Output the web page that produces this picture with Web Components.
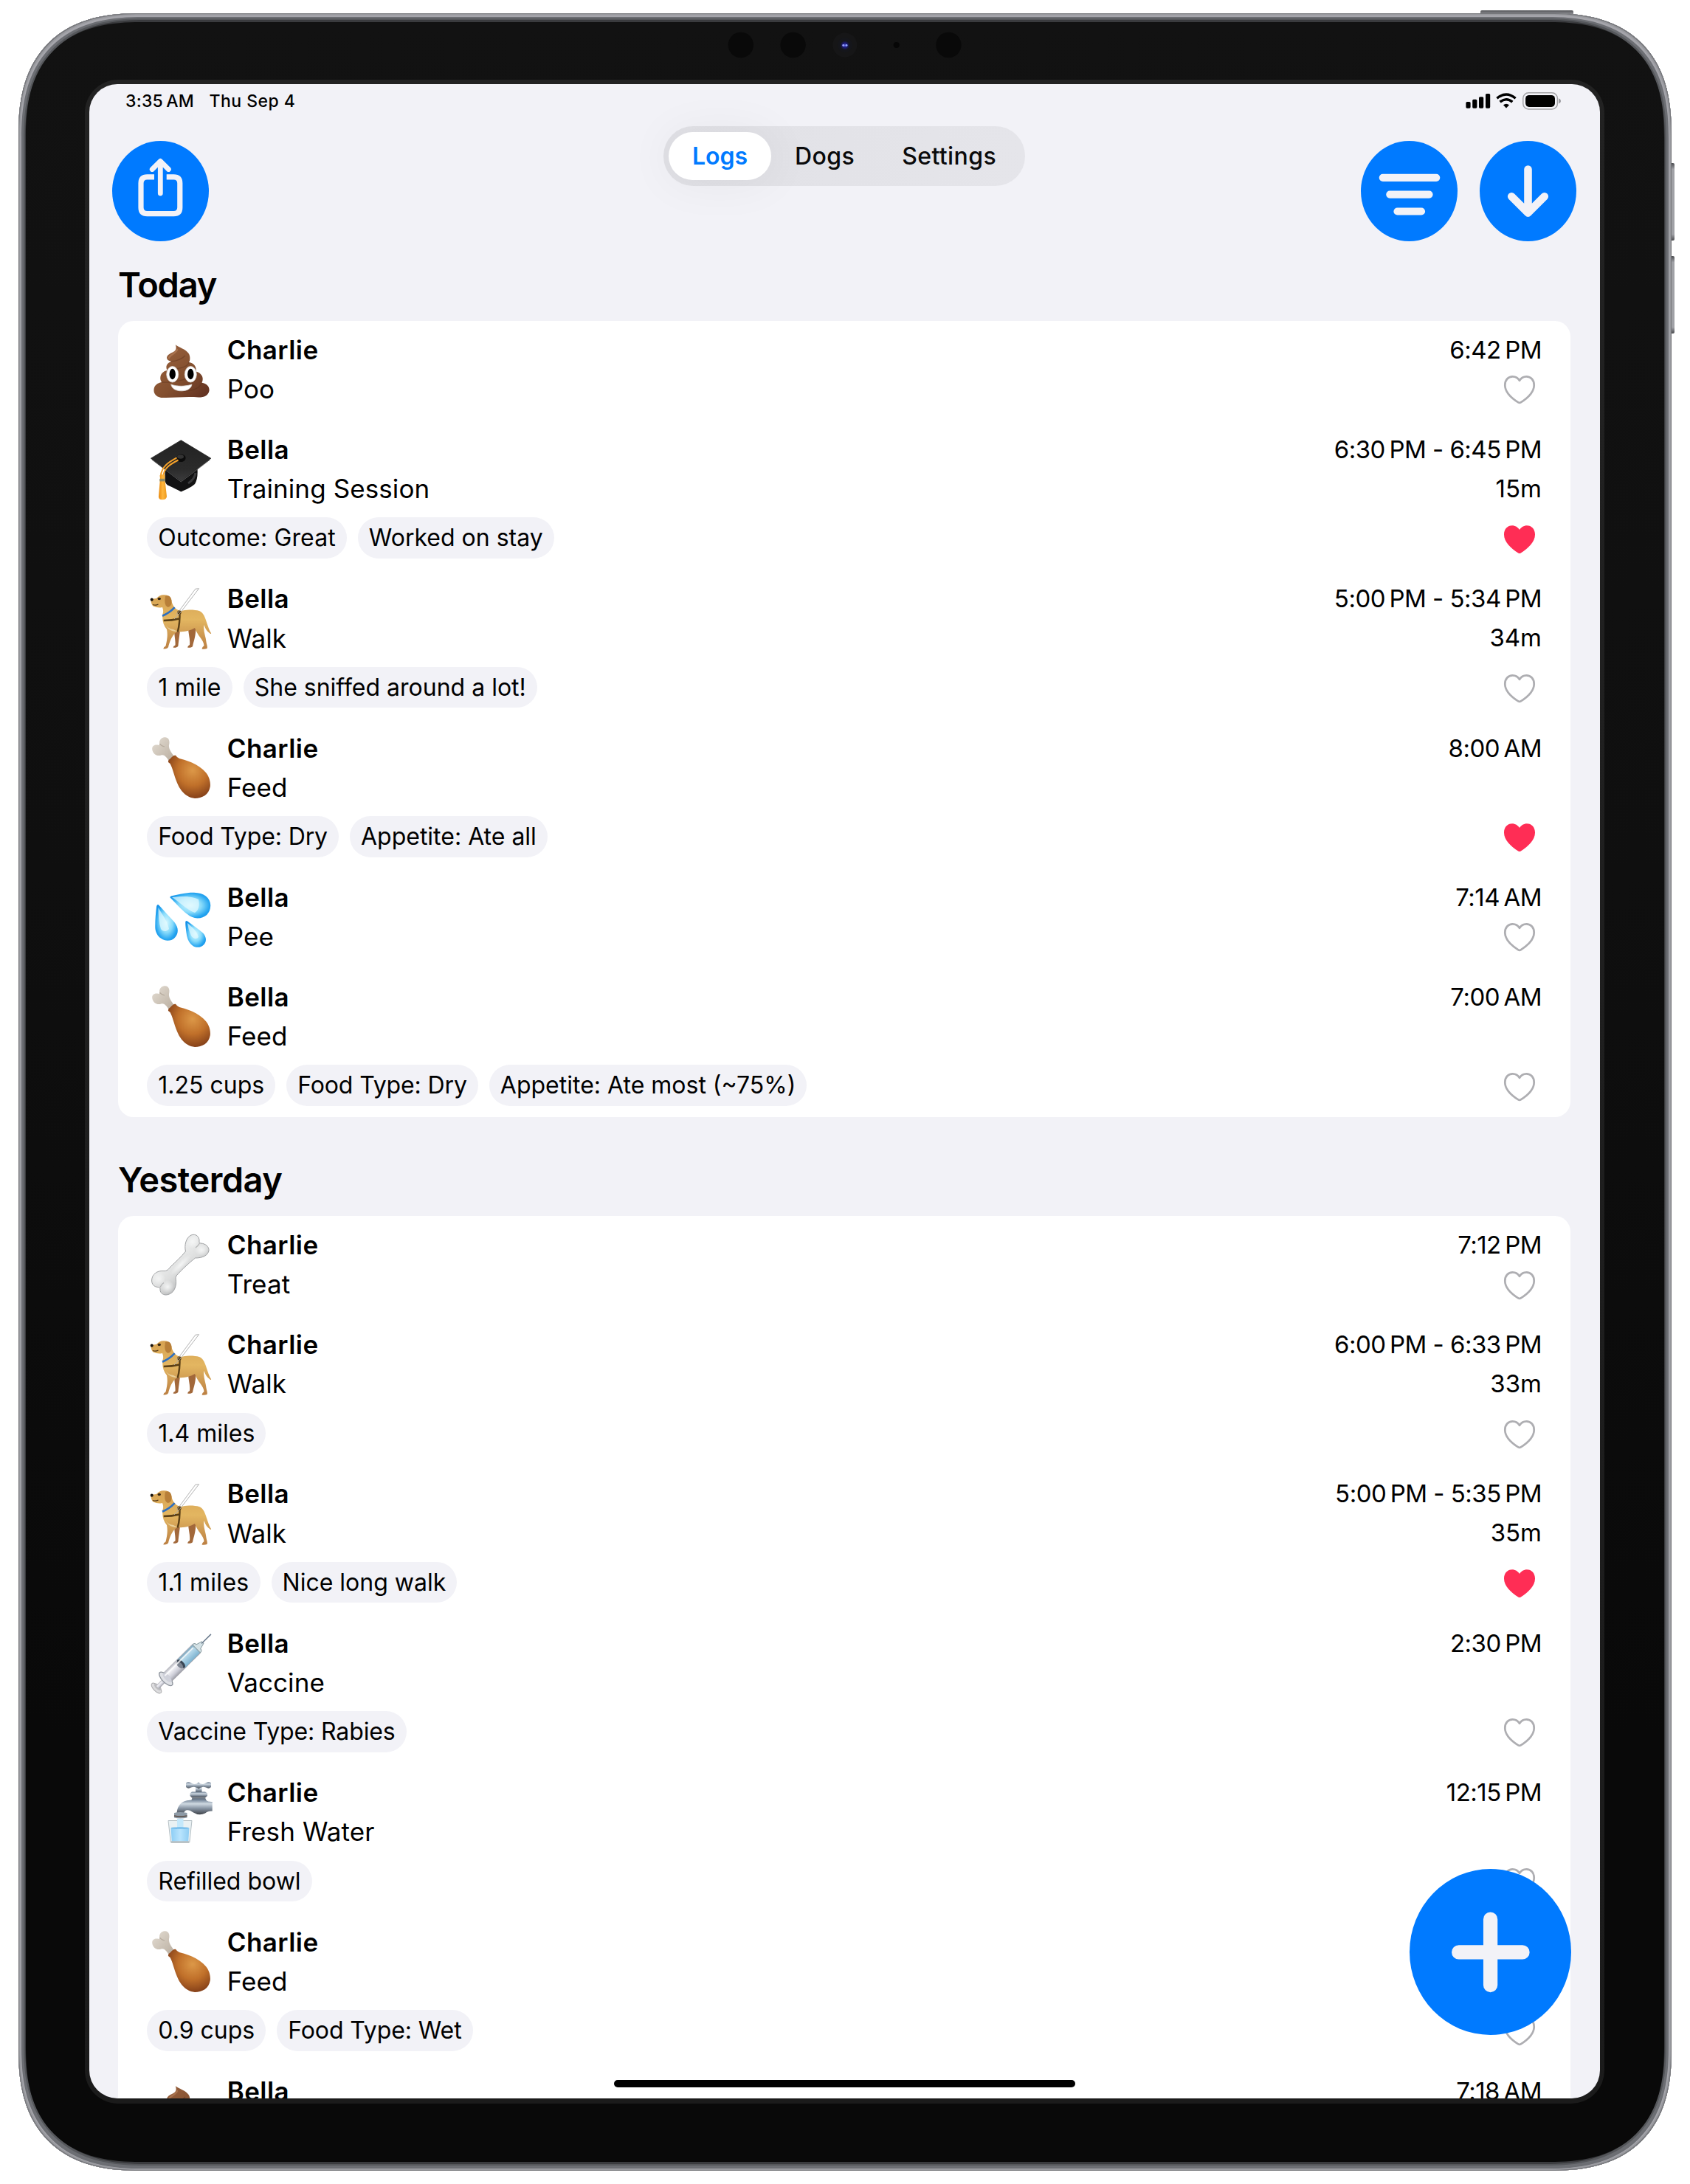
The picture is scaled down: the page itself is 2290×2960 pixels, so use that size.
<!DOCTYPE html>
<html lang="en">
<head>
<meta charset="utf-8">
<title>Logs</title>
<style>
html,body{margin:0;background:#fff}
body{width:2290px;height:2960px;overflow:hidden;font-family:Inter,"Liberation Sans",sans-serif;color:#000}
</style>
</head>
<body>
<tablet-frame>
  <status-bar time="3:35&#8239;AM" date="Thu Sep 4"></status-bar>
  <app-header></app-header>
  <log-section heading="Today" style="--ls:-1.2px">
    <log-row icon="poo" name="Charlie" action="Poo" time="6:42 PM" short></log-row>
    <log-row icon="cap" name="Bella" action="Training Session" time="6:30 PM - 6:45 PM" duration="15m" liked>
      <log-chip style="letter-spacing:.13px">Outcome: Great</log-chip><log-chip>Worked on stay</log-chip>
    </log-row>
    <log-row icon="dog" name="Bella" action="Walk" time="5:00 PM - 5:34 PM" duration="34m">
      <log-chip style="letter-spacing:.2px">1 mile</log-chip><log-chip>She sniffed around a lot!</log-chip>
    </log-row>
    <log-row icon="drumstick" name="Charlie" action="Feed" time="8:00 AM" liked>
      <log-chip style="letter-spacing:-.12px">Food Type: Dry</log-chip><log-chip>Appetite: Ate all</log-chip>
    </log-row>
    <log-row icon="drops" name="Bella" action="Pee" time="7:14 AM" short></log-row>
    <log-row icon="drumstick" name="Bella" action="Feed" time="7:00 AM">
      <log-chip>1.25 cups</log-chip><log-chip style="letter-spacing:-.12px">Food Type: Dry</log-chip><log-chip>Appetite: Ate most (~75%)</log-chip>
    </log-row>
  </log-section>
  <log-section heading="Yesterday" style="--ls:-.55px;--top:55px">
    <log-row icon="bone" name="Charlie" action="Treat" time="7:12 PM" short></log-row>
    <log-row icon="dog" name="Charlie" action="Walk" time="6:00 PM - 6:33 PM" duration="33m">
      <log-chip>1.4 miles</log-chip>
    </log-row>
    <log-row icon="dog" name="Bella" action="Walk" time="5:00 PM - 5:35 PM" duration="35m" liked>
      <log-chip style="letter-spacing:.3px">1.1 miles</log-chip><log-chip>Nice long walk</log-chip>
    </log-row>
    <log-row icon="syringe" name="Bella" action="Vaccine" time="2:30 PM">
      <log-chip style="letter-spacing:-.12px">Vaccine Type: Rabies</log-chip>
    </log-row>
    <log-row icon="faucet" name="Charlie" action="Fresh Water" time="12:15 PM">
      <log-chip>Refilled bowl</log-chip>
    </log-row>
    <log-row icon="drumstick" name="Charlie" action="Feed" time="">
      <log-chip>0.9 cups</log-chip><log-chip style="letter-spacing:-.1px">Food Type: Wet</log-chip>
    </log-row>
    <log-row icon="poo" name="Bella" action="" time="7:18 AM" short></log-row>
  </log-section>
  <add-button slot="overlay"></add-button>
  <home-indicator slot="overlay"></home-indicator>
</tablet-frame>

<script>
function define(name, render) {
  customElements.define(name, class extends HTMLElement {
    connectedCallback() {
      if (this.shadowRoot) return;
      this.attachShadow({ mode: 'open' }).innerHTML = render(this);
    }
  });
}

const ICONS = {
  poo: `<defs><linearGradient id="a" x1="0" y1="0" x2="1" y2="1"><stop offset="0" stop-color="#9c6440"/><stop offset=".55" stop-color="#84502f"/><stop offset="1" stop-color="#5f2f20"/></linearGradient></defs>
    <path fill="url(#a)" d="M34.7 7.2C40 11.5 53.5 14 54.3 24C54.6 27.5 54 29.5 53 31C60 32 63.5 37 62.5 43.5C71 45.5 73.5 53 70.5 58.7C77.500 60 81 64 80.500 69.500C79.500 76 73.500 78.700 66 78.600C50 77 34 79.400 18 79C10 78.800 5 74.500 5.500 68C6 62 10.500 59 16 58C12 52 15 43.500 23.500 42C20.500 36 24 32 29 29.700C20.500 28 21 21.500 31 17.500C36 15 36.500 11.500 34.700 7.200Z"/>
    <g fill="none" stroke="#5e321d" stroke-opacity=".45" stroke-width="1.3"><path d="M24 41.500C34 41 52 38 53 31"/><path d="M16 58C30 59 60 54 62.500 43.500"/><path d="M45 70C58 70 68 66 70.500 58.700"/><path d="M29 29.700C36 30 44 26 48 22"/></g>
    <path d="M26 25C27 21 35 19 37 14" fill="none" stroke="#bf8a63" stroke-opacity=".5" stroke-width="2.500" stroke-linecap="round"/>
    <g fill="#fff" stroke="#d8d4d2" stroke-width=".8"><ellipse cx="30.700" cy="47.300" rx="8" ry="10.800"/><ellipse cx="55.300" cy="47.300" rx="8" ry="10.800"/><path d="M28.700 61C37 64 48 64 57 61C56 67 50 69.800 42.800 69.800C35.500 69.800 30 67 28.700 61Z"/></g>
    <ellipse cx="30.700" cy="47" rx="4.200" ry="7.200"/><ellipse cx="55.300" cy="47" rx="4.200" ry="7.200"/>`,
  cap: `<defs><linearGradient id="a" x1="0" y1="0" x2="0" y2="1"><stop offset="0" stop-color="#222"/><stop offset=".7" stop-color="#2b2b2b"/><stop offset="1" stop-color="#3c3c3d"/></linearGradient><linearGradient id="t" x1="0" x2="1"><stop offset="0" stop-color="#e8890f"/><stop offset=".5" stop-color="#ffb63c"/><stop offset="1" stop-color="#ec9a1e"/></linearGradient></defs>
    <path fill="#121213" d="M20.500 42V55Q20.500 60 24 62.500C32 66 38 69 42.300 71.500C47 69 56 66 61 61Q65.500 54 64.500 40Z"/><path d="M52 60Q61 54 62 46" fill="none" stroke="#39393b" stroke-width="3"/>
    <path fill="url(#a)" stroke="#1a1a1a" stroke-width=".8" stroke-linejoin="round" d="M42.300 1.700L82.800 26.200L42.300 57.500L1.500 26.200Z"/><path d="M3 28L42.300 58L81.500 28" fill="none" stroke="#555" stroke-width="1"/>
    <ellipse cx="42.300" cy="25.700" rx="6.300" ry="5.200" fill="#0b0b0b"/><ellipse cx="41.500" cy="24" rx="4.500" ry="2.800" fill="#333"/>
    <g fill="none" stroke="#f4a12a" stroke-width="2"><path d="M36.500 25.300C26 31 16 37 14.800 50"/><path d="M38.500 28.500C28 34 19 39 18.500 50"/></g>
    <path fill="url(#t)" d="M13.500 49.500Q17 46.500 20.700 49.500L20.300 53.500L23 78Q22.500 82.200 17 82.200Q11.800 82.200 11.900 78L14 53.500Z"/><rect x="13.300" y="53.800" width="7.400" height="3.600" fill="#8e8a66"/>`,
  dog: `<defs><linearGradient id="a" x1="0" y1="0" x2="0" y2="1"><stop offset="0" stop-color="#d6a252"/><stop offset=".45" stop-color="#e3b661"/><stop offset="1" stop-color="#bb7f42"/></linearGradient></defs>
    <path fill="#a2683a" d="M33 55L41 57C40 66 39 72 38.500 78Q38 81 32 80.800Q31 79 34.500 77.500C35 70 33 65 33 55ZM52 53L62 52C63 63 60 70 58 79Q57 81 51.500 80.700Q50.500 79 54 77C55 69 52 62 52 53Z"/>
    <path fill="url(#a)" d="M1.500 15Q5 14.500 9 14Q13 9 19 9.200Q26 9 29 15C30 22 33 29 42 31C50 29 60 29 67 31C76 34 76.500 50 83 61Q83.500 62.800 81.500 61.500Q76 58 73.500 50C72 58 76 66 76.500 73C77 77 78.500 79 77.500 82Q74 83.200 70.500 82.500Q71 79.500 73.500 78C73 70 64 64 61 54C54 58 46 60 38 59C31 62 28 70 25.500 78Q25.500 82.500 18.500 82.500Q18 80.500 21.500 78.500C23.500 70 24.500 64 23 56C18 50 16.500 43 17.500 35Q19 31 17 26Q11 27.500 4.500 24.500Q1.500 22 1.500 15Z"/>
    <path fill="#b87f38" d="M21 11Q28 8 29.500 17Q30 25 24.500 26Q18.500 24 21 11Z"/><path fill="#ead09a" d="M18 42Q21 55 32 56L38 59Q23 60 18 42Z"/>
    <ellipse cx="2.700" cy="15.600" rx="2" ry="2.200" fill="#15120f"/><ellipse cx="12.800" cy="14.500" rx="2.200" ry="1.800" fill="#33230f"/><path d="M4 22.500Q8 24 11.500 22" fill="none" stroke="#4b3216" stroke-width="1.200"/>
    <path d="M17 37.800Q27 33.500 33.700 26.200" fill="none" stroke="#2c6fc1" stroke-width="2.600"/>
    <g fill="none" stroke="#5a3f16" stroke-width="2.400"><path d="M18.700 44Q30 44 40 41.500M40.500 31Q41 48 37.700 59.500"/><circle cx="40" cy="33" r="1.500"/></g>
    <path d="M36 36L61.800 1.200L66.500 .7L40.500 34.500L33 42" fill="none" stroke="#a9a9a9" stroke-width=".9"/>`,
  drumstick: `<defs><radialGradient id="a" cx=".58" cy=".35" r=".7"><stop offset="0" stop-color="#dc9848"/><stop offset=".5" stop-color="#c0702a"/><stop offset="1" stop-color="#7d3a17"/></radialGradient><linearGradient id="b" x1="0" y1="0" x2="1" y2="1"><stop offset="0" stop-color="#e4ddd3"/><stop offset="1" stop-color="#b9aea0"/></linearGradient></defs>
    <path fill="url(#b)" d="M13 6C13.500 1.500 17 -1 21 -.8C25.500 -.5 27.500 4 26 10C25.500 15 29 20 33 25L25.500 31C22.500 26 19.500 22.500 15.500 23.500C9 26 3 20.500 3.200 14.500C3.500 10 8 8.800 12 10Q13.500 9.500 13 6Z"/><path d="M13.500 8Q16 11.500 20 12" fill="none" stroke="#a99e90" stroke-opacity=".7" stroke-width="1.200"/>
    <path fill="url(#a)" d="M25 33Q24.500 30 27.500 28.500Q32 23 35 23.800Q37 27 40 28C52 31 64 36 72 43C80 50 82.500 58 81.800 66C80 77 71 82 61 82C49 81 41 71 37 61C32.500 50 31 41 27.500 35Z"/>`,
  drops: `<defs><radialGradient id="a" cx=".5" cy=".5" r=".6"><stop offset="0" stop-color="#d4f7ff"/><stop offset=".45" stop-color="#8adcfb"/><stop offset=".8" stop-color="#25a5f0"/><stop offset="1" stop-color="#1591e8"/></radialGradient></defs>
    <g fill="url(#a)"><path d="M27.500 14.500Q27 12.800 29.500 12.300C40 9.800 50 7.500 60 7.700C73 8 82 14.500 82.300 25C82 36 75 42.500 64.500 42.500C52 42 43 30 27.500 14.500Z"/><path d="M9.200 26Q10.500 22.500 12.500 25C20 33 27 41 33.500 48C38 54 39 60 36.500 65C33.500 71 29 73 23.500 72.800C14 72 7.500 64 7.300 55C7.200 45 8 35 9.200 26Z"/><path d="M48.300 47Q49.500 45.500 51 46.500C58 52 66 57 72 62.500C77 68 77 74 73.500 78C70 82 65 82.500 61 81.300C54 78.500 50.500 71 49.500 62C49 57 48 52 48.300 47Z"/></g>
    <g fill="#e6fbff" opacity=".7"><path d="M30 14C42 13 56 11.500 66 17C68 26 66 32 61 35C50 31 42 22 30 14Z"/><path d="M11.500 28C17 38 24 46 26 57C22 62 17 60 15 57C12 48 11.500 38 11.500 28Z"/><path d="M51 49C58 55 64 60 66 68C63 72 58 70 56 66C53 60 52 55 51 49Z"/></g>`,
  bone: `<defs><linearGradient id="a" x1="0" y1="0" x2=".8" y2="1"><stop offset="0" stop-color="#c9cbcc"/><stop offset=".4" stop-color="#ebecec"/><stop offset=".6" stop-color="#dcdddd"/><stop offset="1" stop-color="#939596"/></linearGradient><radialGradient id="k"><stop offset="0" stop-color="#f4f5f5"/><stop offset="1" stop-color="#f4f5f5" stop-opacity="0"/></radialGradient></defs>
    <path fill="url(#a)" stroke="#a0a2a4" stroke-width="1" d="M48.500 23C46.500 15 49 4 56 1C62 -1.500 67.500 3 67 9C66.500 11 67.500 12 69 12C76 12.500 80.500 17 80 22C78.500 29 71 32 61.500 32C54 38 44 47 36 56C34 59 36 62 35.500 66C35 75 30 81.500 22 82C16.500 82 13.500 78 14 74C14 72 13 71.500 11 71.500C5.500 71 2.500 67.500 2.600 62C3 54 10 49 18 49.500C24 50 25 47 28 44C35 37 42 31 48.500 23Z"/>
    <g fill="url(#k)"><ellipse cx="58" cy="10" rx="8" ry="9"/><ellipse cx="70" cy="21" rx="9" ry="8"/><ellipse cx="12" cy="60" rx="9" ry="9"/><ellipse cx="24" cy="71" rx="9" ry="9"/><ellipse cx="42" cy="41" rx="20" ry="5" transform="rotate(-45 42 41)"/></g>
    <path d="M67.500 12Q65 16 62 18M14 71.500Q16 67 19 65.500" fill="none" stroke="#9fa1a3" stroke-opacity=".7" stroke-width="1.300"/>`,
  syringe: `<defs><linearGradient id="a" x1="0" y1="0" x2="0" y2="1"><stop offset="0" stop-color="#b4b5bd"/><stop offset=".3" stop-color="#f3f3f7"/><stop offset=".7" stop-color="#cbccd6"/><stop offset="1" stop-color="#9a9ba3"/></linearGradient><linearGradient id="b" x1="0" y1="0" x2="0" y2="1"><stop offset="0" stop-color="#7fa6bd"/><stop offset=".35" stop-color="#b5d8ea"/><stop offset="1" stop-color="#7db3d0"/></linearGradient></defs>
    <g transform="translate(9 75) rotate(-44.700)"><ellipse rx="4" ry="8.800" fill="#dcdcde" stroke="#acacae"/><ellipse cx="2.500" rx="3" ry="6" fill="#bdbdc0"/><rect x="2" y="-3" width="16" height="6" fill="url(#a)"/>
    <rect x="17" y="-8.300" width="61" height="16.600" rx="3" fill="url(#a)"/><path d="M47 -7.500H75Q78 -7 78 0Q78 7 75 7.500H47Z" fill="url(#b)"/><ellipse cx="47" rx="3.600" ry="7.200" fill="#3a4654"/><ellipse cx="44.500" rx="3" ry="5.500" fill="#7d8490"/>
    <ellipse cx="18" rx="5" ry="12" fill="#dfe1e6" stroke="#8e949c" stroke-width="1.300"/><ellipse cx="20.500" rx="3.600" ry="8" fill="#cfd1da"/><path d="M20 -4H74" stroke="#fff" stroke-opacity=".8" stroke-width="2"/>
    <path d="M76 -7.500Q80 -8 80 -4L88 -1.800V1.800L80 4Q80 8 76 7.500Z" fill="#d4e2e6" stroke="#8b9da3" stroke-width="1"/><path d="M86 0H104" stroke="#6b7b8d" stroke-width="1.500"/></g>`,
  faucet: `<defs><linearGradient id="a" x1="0" y1="0" x2="0" y2="1"><stop offset="0" stop-color="#66788d"/><stop offset=".3" stop-color="#cfd9e2"/><stop offset=".6" stop-color="#8794a3"/><stop offset="1" stop-color="#3f4349"/></linearGradient><linearGradient id="w" x1="0" x2="1"><stop offset="0" stop-color="#8ccdf5"/><stop offset=".5" stop-color="#b9e4fd"/><stop offset="1" stop-color="#8fcdf3"/></linearGradient></defs>
    <path fill="url(#a)" d="M62 6H70.500V15H62Z"/><path fill="url(#a)" d="M49 1.500Q52 -1 56 1.500Q62 5 66 .5Q70 5 76 1.500Q80 -1 83 1.500V7Q80 10 76 7.500Q70 5.500 66.300 9.500Q62 5.500 56 7.500Q52 10 49 7Z"/>
    <path fill="url(#a)" d="M57 13.500H75L78 15.500V19L75 21.500H57L54.500 19V15.500Z"/><path fill="#6e7a88" d="M57.500 21.500H75L77 26H56Z"/>
    <path fill="url(#a)" d="M36.500 42Q38 24.500 58 24.500Q66 22.500 75 24.500Q80 27.500 84.700 27V39.500Q78 39.500 75 42.500Q67 46.500 59 41.500Q53 37 49 38.500Q46.500 40 46 42Z"/>
    <path fill="#8e9aa6" d="M33 42Q41 40 50.500 42V48.500Q41 50.500 33 48.500Z"/><path d="M33 46Q41 48 50.500 46" fill="none" stroke="#5b4c44" stroke-width="1.500"/>
    <path fill="#e6eef1" fill-opacity=".85" stroke="#b4bfc4" d="M25 52.500H57L53.800 82H28.300Z"/><path fill="url(#w)" d="M28.500 62.500H53.500L52.200 80.500H29.800Z"/><rect x="37" y="50" width="8.500" height="14" fill="#c4e8fb"/><ellipse cx="41" cy="62.500" rx="12.300" ry="1" fill="#5eb0e6"/><path d="M29 81.500H53" stroke="#aab3b6" stroke-width="2"/>`
};

define('log-icon', el => `<style>:host{display:block;width:84px;height:84px}svg{display:block;overflow:visible}</style>
  <svg width="84" height="84" viewBox="0 0 84 84">${ICONS[el.getAttribute('name')]}</svg>`);

const HEART = 'M21 6C23 2.500 27 .2 31 .2C37.300 .2 42 5 42 12.500C42 22.500 33 31 22.800 37.500Q21 38.600 19.200 37.500C9 31 0 22.500 0 12.500C0 5 4.700 .2 11 .2C15 .2 19 2.500 21 6Z';
define('like-heart', el => `<style>:host{display:block;width:42px;height:38px}svg{display:block;overflow:visible}</style>
  <svg width="42" height="38" viewBox="0 0 42 38">${el.hasAttribute('liked')
    ? `<path d="${HEART}" fill="#ff2d55"/>`
    : `<path d="${HEART}" transform="translate(1.300 1.200) scale(.938)" fill="none" stroke="#aeaeb2" stroke-width="2.900" stroke-linejoin="round"/>`}</svg>`);

define('log-chip', () => `<style>:host{display:block;height:55.500px;line-height:56.200px;padding:0 15px;border-radius:28px;background:#f2f2f7;font-size:32px;white-space:nowrap}</style><slot></slot>`);

define('log-row', el => {
  const a = n => el.getAttribute(n) || '';
  const short = el.hasAttribute('short');
  const heart = `<like-heart ${el.hasAttribute('liked') ? 'liked' : ''}></like-heart>`;
  const time = a('time').replace(/ (?=[AP]M)/g, '\u202f');
  return `<style>
    :host{display:flex;flex-direction:column;flex:none;box-sizing:border-box;height:${short ? 134.84 : 202.4}px;padding:12.800px 39px 0 39.300px}
    .main{display:flex;height:106px;line-height:53.300px}
    log-icon{margin:12.200px 20.900px 0 3.500px}
    .what{flex:1;font-size:35px;letter-spacing:.1px}
    .name{height:53.300px;font-weight:600;letter-spacing:.45px}
    .when{display:flex;flex-direction:column;align-items:flex-end;font-size:33px}
    .time{height:53px;letter-spacing:-.52px;white-space:nowrap}
    .when like-heart{margin:8.400px 8.600px 0 0}
    .extra{display:flex;gap:15px;margin-top:12.500px;height:55.500px}
    .extra like-heart{margin:10.200px 8.600px 0 auto}
  </style>
  <div class="main"><log-icon name="${a('icon')}"></log-icon>
    <div class="what"><div class="name">${a('name')}</div><div>${a('action')}</div></div>
    <div class="when"><div class="time">${time}</div>${short ? heart : `<div>${a('duration')}</div>`}</div>
  </div>
  ${short ? '' : `<div class="extra"><slot></slot>${heart}</div>`}`;
});

define('log-section', el => `<style>
    :host{display:block;flex:none;padding:var(--top,29.400px) 40px 0 39px}
    h2{margin:0 0 18.900px;font-size:47px;line-height:60px;font-weight:600;letter-spacing:var(--ls,0)}
    .card{display:flex;flex-direction:column;background:#fff;border-radius:21px}
  </style><h2>${el.getAttribute('heading')}</h2><div class="card"><slot></slot></div>`);

define('status-bar', el => `<style>
    :host{display:flex;flex:none;align-items:center;height:46px;line-height:47px;padding:0 53px 0 49px;font-size:23px;font-weight:500}
    .t{letter-spacing:.25px;margin-right:20.500px}.d{letter-spacing:.45px;flex:1}svg{display:block}
  </style><span class="t">${el.getAttribute('time')}</span><span class="d">${el.getAttribute('date')}</span>
  <svg width="129" height="24" viewBox="0 0 129 24">
    <rect x=".4" y="13" width="6.200" height="8.700" rx="1.600"/><rect x="9.200" y="9.800" width="6.200" height="11.900" rx="1.600"/><rect x="18" y="6.200" width="6.200" height="15.500" rx="1.600"/><rect x="27" y="2" width="6.200" height="19.700" rx="1.600"/>
    <g fill="none" stroke="#000" stroke-width="3.400"><path d="M42.400 8.300Q55 -2.300 67.600 8.300"/><path d="M46.600 13.100Q55 6.200 63.400 13.100"/></g><path d="M51 17.300Q55 14.200 59 17.300L55 21.500Z"/>
    <rect x="77.800" y=".8" width="46.600" height="22.200" rx="7.500" fill="none" stroke="#a2a2a6" stroke-width="1.500"/><rect x="81.100" y="3.900" width="39.900" height="16" rx="4.800"/><path d="M126.200 8.300Q129 9.500 129 11.900Q129 14.300 126.200 15.500Z" fill="#97979b"/>
  </svg>`);

define('round-button', () => `<style>:host{display:block;width:131px;height:136px;border-radius:50%;background:#007aff}::slotted(svg){display:block}</style><slot></slot>`);

define('tab-bar', () => `<style>
    :host{display:flex;box-sizing:border-box;height:80.400px;padding:7.500px 7.200px;border-radius:40.200px;background:linear-gradient(90deg,#e1e1e6,#e5e5ea);font-size:32px;line-height:65.400px;font-weight:500;letter-spacing:.4px}
    span{padding:0 32px;border-radius:33px;color:#0a0a0b}
    .on{background:#fff;color:#007aff;font-weight:600;letter-spacing:0;box-shadow:0 2px 60px 8px rgba(0,0,0,.045)}
    span:not(.on){position:relative}
  </style><span class="on">Logs</span><span>Dogs</span><span>Settings</span>`);

define('app-header', () => `<style>
    :host{display:grid;flex:none;grid-template-columns:1fr auto 1fr;height:155.700px;padding:11.300px 32px 0 31px}
    round-button{margin-top:19.700px}
    .right{display:flex;justify-content:flex-end;gap:30.500px}
  </style>
  <div><round-button><svg width="131" height="136" viewBox="0 0 131 136" fill="none" stroke="#f2f2f7" stroke-width="7.200" stroke-linecap="round" stroke-linejoin="round">
    <path stroke-linecap="butt" d="M57 48.900H47.400Q39 48.900 39 57.300V90.300Q39 98.700 47.400 98.700H83.400Q91.800 98.700 91.800 90.300V57.300Q91.800 48.900 83.400 48.900H73.700"/>
    <path d="M65.300 71V28M54.200 38.500L65.300 27.300L76.400 38.500" stroke-width="6.800"/></svg></round-button></div>
  <tab-bar></tab-bar>
  <div class="right">
    <round-button><svg width="131" height="136" viewBox="0 0 131 136" stroke="#f2f2f7" stroke-width="10.200" stroke-linecap="round"><path d="M29.800 49.800H102.200M39.300 72.600H92.500M49.500 95.500H82"/></svg></round-button>
    <round-button><svg width="131" height="136" viewBox="0 0 131 136" fill="none" stroke="#f2f2f7" stroke-width="10.600" stroke-linecap="round" stroke-linejoin="round"><path d="M65.500 38.500V97M43.200 75.300L65.500 97.600L87.800 75.300"/></svg></round-button>
  </div>`);

define('add-button', () => `<style>:host{position:absolute;right:38.800px;bottom:85.800px;width:219.500px;height:225.700px;border-radius:50%;background:#007aff}svg{display:block}</style>
  <svg width="219.500" height="225.700" viewBox="0 0 219.500 225.700" stroke="#f2f2f7" stroke-width="19.300" stroke-linecap="round"><path d="M66.700 112.900H153M109.600 68.200V157.500"/></svg>`);

define('home-indicator', () => `<style>:host{position:absolute;left:710.500px;bottom:15.500px;width:625px;height:10px;border-radius:5px;background:#000}</style>`);

define('camera-strip', () => `<style>
    :host{display:block;height:78px}svg{display:block;margin:0 auto}
  </style><svg width="320" height="78" viewBox="0 0 320 78">
    <defs><radialGradient id="l"><stop offset="0" stop-color="#5f63e8"/><stop offset=".45" stop-color="#1d1b7c"/><stop offset="1" stop-color="#15151f"/></radialGradient></defs>
    <g fill="#090909"><circle cx="18.800" cy="31" r="17.200"/><circle cx="89.600" cy="31" r="17.200"/><circle cx="300.400" cy="31" r="17.200"/></g>
    <circle cx="159.900" cy="31" r="16.500" fill="#161617"/><circle cx="159.900" cy="31" r="10" fill="#15161b"/><circle cx="159.900" cy="31.500" r="6.200" fill="url(#l)"/><circle cx="157.700" cy="31.500" r="1.400" fill="#9aa4ff"/><circle cx="162.100" cy="31.500" r="1.400" fill="#8fa8ff"/>
    <circle cx="229.700" cy="31" r="4" fill="#060606"/>
  </svg>`);

define('tablet-frame', () => `<style>
    :host{display:block;position:relative;width:2240px;height:2924px;margin:18px 25px}
    .btn{position:absolute;background:linear-gradient(#55565a,#aaaab0);border-radius:2px}
    .btn.top{left:1981px;top:-4px;width:126px;height:8px}
    .btn.side{right:-4px;width:8px;background:linear-gradient(#4b4c50,#a0a1a6 8%,#a0a1a6 92%,#4b4c50)}
    .metal{position:relative;box-sizing:border-box;height:100%;padding:12px 10px;border-radius:165px;corner-shape:superellipse(1.3);background:#3a3b3e;
      box-shadow:inset 0 0 0 1px #75767a,inset 0 0 0 2.500px #98999e,inset 0 1px 0 4px #a5a5ab,inset 0 0 0 7px #6c6e73,inset 0 0 0 9px #55575b}
    .bezel{box-sizing:border-box;height:100%;padding-bottom:79px;border-radius:155px;corner-shape:superellipse(1.3);background:linear-gradient(#121212,#0f0f0f 40%,#090909 80%)}
    .glass{box-sizing:border-box;width:2059px;height:2743px;margin:0 0 0 80px;padding:6px 6px 7px;border-radius:45px;background:linear-gradient(#222,#1b1b1b)}
    .screen{position:relative;display:flex;flex-direction:column;width:2047px;height:2730px;border-radius:38px;overflow:hidden;background:#f2f2f7}
  </style>
  <div class="btn top"></div><div class="btn side" style="top:203px;height:105px"></div><div class="btn side" style="top:329px;height:105px"></div>
  <div class="metal"><div class="bezel"><camera-strip></camera-strip>
    <div class="glass"><div class="screen"><slot></slot><slot name="overlay"></slot></div></div>
  </div></div>`);
</script>
</body>
</html>
